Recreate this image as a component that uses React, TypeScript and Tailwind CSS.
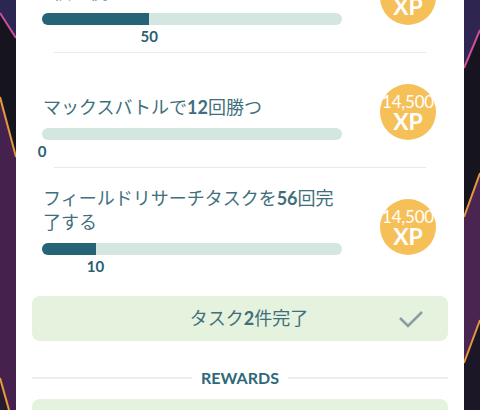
import React from 'react';

type Task = {
  text: React.ReactNode;
  progress: number;
  goal: number;
  xp: string;
};

const tasks: Task[] = [
  { text: <><b className="font-bold">5</b>個を使う</>, progress: 50, goal: 140, xp: '14,500' },
  { text: <>マックスバトルで<b className="font-bold">12</b>回勝つ</>, progress: 0, goal: 12, xp: '14,500' },
  { text: <>フィールドリサーチタスクを<b className="font-bold">56</b>回完了する</>, progress: 10, goal: 56, xp: '14,500' },
];

function Backdrop() {
  return (
    <svg className="absolute inset-0" width="480" height="410" viewBox="0 0 480 410">
      <rect width="480" height="410" fill="#16141f" />
      {/* left strip */}
      <polygon points="0,0 16,0 16,38 0,13" fill="#2c2752" />
      <polygon points="0,97 16,157 16,410 8,410 0,380" fill="#45224d" />
      <polygon points="0,380 8,410 0,410" fill="#2a1a30" />
      <line x1="0" y1="13" x2="16" y2="38" stroke="#d14f9a" strokeWidth="2" />
      <line x1="0" y1="97" x2="16" y2="157" stroke="#e59a3c" strokeWidth="2" />
      <line x1="0" y1="378" x2="9" y2="410" stroke="#e59a3c" strokeWidth="2" />
      {/* right strip */}
      <polygon points="464,0 480,0 480,30 464,68" fill="#2e2650" />
      <polygon points="464,217 480,173 480,320 464,363" fill="#4a2552" />
      <polygon points="464,363 480,320 480,410 464,410" fill="#1b1726" />
      <line x1="464" y1="68" x2="480" y2="30" stroke="#d14f9a" strokeWidth="2" />
      <line x1="464" y1="217" x2="480" y2="173" stroke="#e59a3c" strokeWidth="2" />
      <line x1="464" y1="363" x2="480" y2="320" stroke="#e59a3c" strokeWidth="2" />
    </svg>
  );
}

function TaskRow({ task }: { task: Task }) {
  const pct = (task.progress / task.goal) * 100;
  return (
    <div className="flex h-[114px] items-center pl-[26px] pr-[28px]">
      <div className="flex h-full w-[300px] flex-col justify-end pb-2">
        <div className="pl-px text-[18px] leading-6 text-[#3f6f7c]">{task.text}</div>
        <div className="mt-[9px] h-3 w-[300px] overflow-hidden rounded-full bg-[#d3e6df]">
          <div className="h-full bg-[#256477]" style={{ width: `${pct}%` }} />
        </div>
        <div className="relative mt-[3px] h-4">
          <span
            className="absolute top-0 -translate-x-1/2 text-[15px] font-bold leading-4 text-[#2a6072]"
            style={{ left: `${pct}%` }}
          >
            {task.progress}
          </span>
        </div>
      </div>
      <div className="ml-auto mt-1 flex size-14 shrink-0 flex-col items-center justify-center rounded-full bg-[#f6c058] text-white">
        <span className="text-[17px] leading-[18px] tracking-[-0.2px]">{task.xp}</span>
        <span className="text-[23px] font-bold leading-[20px]">XP</span>
      </div>
    </div>
  );
}

export default function App() {
  return (
    <div className="relative h-[410px] w-[480px] overflow-hidden font-[Lato,'Noto_Sans_CJK_JP',sans-serif]">
      <Backdrop />
      <div className="relative mx-4 h-full overflow-hidden bg-white">
        <div className="-mt-[62px]">
          {tasks.map((task, i) => (
            <div key={i}>
              <TaskRow task={task} />
              {i < tasks.length - 1 && <div className="mx-[38px] h-px bg-[#e3eded]" />}
            </div>
          ))}

          <div className="mx-4 mt-[14px] flex h-[45px] items-center rounded-lg bg-[#e5f3de]">
            <div className="flex-1 pl-[67px] text-center text-[18px] text-[#3f6f7c]">
              タスク<b className="font-bold">2</b>件完了
            </div>
            <svg className="mr-[25px]" width="24" height="18" viewBox="0 0 24 18">
              <polyline points="1,8 9,16 23,2" fill="none" stroke="#8c9ca2" strokeWidth="2.5" />
            </svg>
          </div>

          <div className="mx-4 mt-[27px] flex h-5 items-center gap-[9px]">
            <div className="h-[2px] flex-1 bg-[#eaf0f2]" />
            <span className="text-[16px] font-bold leading-5 text-[#2d6879]">REWARDS</span>
            <div className="h-[2px] flex-1 bg-[#eaf0f2]" />
          </div>

          <div className="mx-4 mt-[11px] h-20 rounded-lg bg-[#e5f3de]" />
        </div>
      </div>
    </div>
  );
}
